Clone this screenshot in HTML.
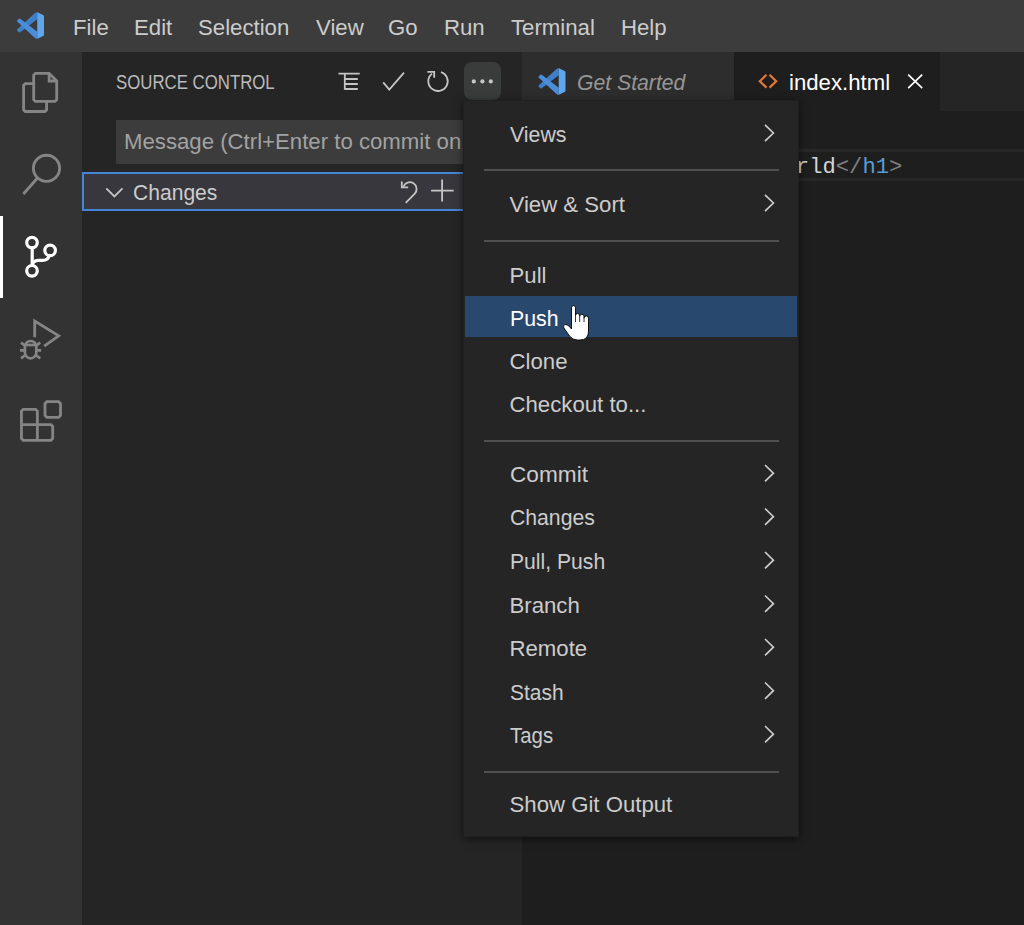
<!DOCTYPE html>
<html>
<head>
<meta charset="utf-8">
<style>
*{margin:0;padding:0;box-sizing:border-box}
html,body{width:1024px;height:925px;overflow:hidden;background:#1e1e1e;font-family:"Liberation Sans",sans-serif}
.a{position:absolute}
.t{position:absolute;white-space:nowrap;font-size:22.2px;line-height:22px}
svg{position:absolute;overflow:visible}
#title{left:0;top:0;width:1024px;height:52px;background:#3c3c3c}
#title .t{color:#cccccc;top:17px}
#act{left:0;top:52px;width:82px;height:873px;background:#333333}
#side{left:82px;top:52px;width:440px;height:873px;background:#252526}
#editor{left:522px;top:52px;width:502px;height:873px;background:#1e1e1e}
#tabs{left:522px;top:52px;width:502px;height:59px;background:#252526}
#menu{left:463px;top:100px;width:336px;height:737px;background:#252526;box-shadow:0 2px 8px rgba(0,0,0,0.55);border:1px solid #202020}
.mt{position:absolute;white-space:nowrap;font-size:22.2px;line-height:22px;color:#cccccc;left:509.5px;transform-origin:0 0}
.sep{position:absolute;left:484px;width:295px;height:2px;background:#5f5f5f;transform:scaleY(0.75)}
</style>
</head>
<body>
<!-- title bar -->
<div id="title" class="a">
  <svg style="left:17px;top:12px" width="27" height="27" viewBox="0 0 100 100">
    <path fill="#3f7fc8" d="M68.76 2.07 L75 0.5 V27.3 L12.15 75 a4.16 4.16 0 0 1 -5.32 -.24 l-5.5 -5 a4.17 4.17 0 0 1 0 -6.16 Z"/>
    <path fill="#4a8edb" d="M12.15 25 L75 72.7 V99.5 L68.76 97.93 L1.33 36.4 a4.17 4.17 0 0 1 0 -6.16 l5.5 -5 a4.16 4.16 0 0 1 5.32 -.24 Z"/>
    <path fill="#5fa6ec" d="M75 0.5 L75.86 .87 L96.46 10.8 A6.25 6.25 0 0 1 100 16.4 V83.6 a6.25 6.25 0 0 1 -3.54 5.63 L75.86 99.13 L75 99.5 Z"/>
  </svg>
  <div class="t" style="left:73px">File</div>
  <div class="t" style="left:134px">Edit</div>
  <div class="t" style="left:198px">Selection</div>
  <div class="t" style="left:316px">View</div>
  <div class="t" style="left:388px">Go</div>
  <div class="t" style="left:444px">Run</div>
  <div class="t" style="left:511px">Terminal</div>
  <div class="t" style="left:621px">Help</div>
</div>

<!-- activity bar -->
<div id="act" class="a">
  <div class="a" style="left:0;top:164px;width:3px;height:82px;background:#ffffff"></div>
</div>
<svg style="left:0;top:0" width="82" height="925" fill="none" stroke-linecap="round" stroke-linejoin="round">
  <!-- files -->
  <g stroke="#858585" stroke-width="2.8" stroke-linejoin="miter" stroke-linecap="butt">
    <path d="M33.7 83.7 H25.3 L23.6 85.4 V109.8 L25.3 111.5 H44.9 L46.6 109.8 V101.4"/>
    <path d="M35.4 73.3 H49.1 L56.7 80.9 V99.7 L55 101.4 H35.4 L33.7 99.7 V75 Z"/>
    <path d="M49.1 73.3 V81 H56.7"/>
  </g>
  <!-- search -->
  <g stroke="#858585" stroke-width="2.9" stroke-linecap="butt">
    <circle cx="46.5" cy="168.3" r="13.1"/>
    <path d="M37.5 178 L23.4 194"/>
  </g>
  <!-- git -->
  <g stroke="#ffffff" stroke-width="3.2">
    <circle cx="32" cy="242.6" r="5.3"/>
    <circle cx="50.1" cy="250.4" r="5.3"/>
    <circle cx="32" cy="270.8" r="5.3"/>
    <path d="M32.2 247.9 V265.5"/>
    <path d="M49.3 255.6 C48.3 259 46 260.4 42.5 260.4 H38.5 C35 260.4 32.6 262 32.3 265.5"/>
  </g>
  <!-- run & debug -->
  <g stroke="#858585" stroke-width="2.8" stroke-linecap="butt" stroke-linejoin="miter">
    <path d="M34.7 337.2 V321 L58.7 335.8 L44.2 346.2"/>
  </g>
  <g stroke="#858585" stroke-width="2.7" stroke-linecap="butt">
    <path d="M24.9 346.7 a5.7 5.7 0 0 1 11.4 0 V352.6 a5.7 5.7 0 0 1 -11.4 0 Z"/>
    <path d="M26 345 H35.2"/>
    <path d="M20 350.3 H24.8 M36.4 350.3 H41.2 M21 342.6 L25.4 346 M40.2 342.6 L35.8 346 M21 358.4 L25.4 355 M40.2 358.4 L35.8 355"/>
  </g>
  <!-- extensions -->
  <g stroke="#858585" stroke-width="2.8" stroke-linejoin="miter" stroke-linecap="butt">
    <path d="M23.25 409.3 H35.55 L37.35 411.1 V424.6 H50.9 L52.7 426.4 V438.5 L50.9 440.3 H23.25 L21.45 438.5 V411.1 Z"/>
    <path d="M21.45 424.6 H37.35 V440.3"/>
    <path d="M46.8 401.7 H58.7 L60.5 403.5 V415.5 L58.7 417.3 H46.8 L45 415.5 V403.5 Z"/>
  </g>
</svg>

<!-- sidebar -->
<div id="side" class="a"></div>
<div class="t" style="left:116px;top:71px;font-size:20px;color:#bbbbbb;transform:scaleX(0.84);transform-origin:0 0">SOURCE CONTROL</div>
<svg style="left:0;top:0" width="522" height="240" fill="none" stroke="#c5c5c5" stroke-linecap="butt" stroke-linejoin="miter">
  <g stroke-width="1.8">
    <path d="M338.5 73.6 H359.7 M344.8 73.6 V89.8 M344.8 79 H357.8 M344.8 84 H357.8 M344.8 89 H357.8"/>
    <path d="M383.2 82.3 L389.3 89.6 L404 72.6"/>
    <path d="M441 72.07 A9.7 9.7 0 1 1 432.03 73.66"/>
    <path d="M427.4 71.8 H434.2 V77.8"/>
  </g>
</svg>
<div class="a" style="left:464px;top:62px;width:37px;height:38px;border-radius:8px;background:#3a3b3b"></div>
<svg style="left:0;top:0" width="522" height="120">
  <circle cx="473.8" cy="81.4" r="2.1" fill="#c5c5c5"/>
  <circle cx="482.4" cy="81.4" r="2.1" fill="#c5c5c5"/>
  <circle cx="490.8" cy="81.4" r="2.1" fill="#c5c5c5"/>
</svg>
<!-- input -->
<div class="a" style="left:116px;top:120px;width:406px;height:44px;background:#3c3c3c"></div>
<div class="t" style="left:124px;top:131px;color:#a2a2a2">Message (Ctrl+Enter to commit on 'master')</div>
<!-- changes row -->
<div class="a" style="left:82px;top:172px;width:440px;height:39px;background:#37373d;border:2px solid #4584d6"></div>
<div class="t" style="left:133px;top:182px;color:#cccccc;transform:scaleX(0.95);transform-origin:0 0">Changes</div>
<svg style="left:0;top:0" width="522" height="240" fill="none" stroke="#c5c5c5" stroke-width="1.8">
  <path d="M106.3 188.3 L114.4 196.5 L122.5 188.3"/>
  <path d="M401.8 181.4 V187.4 H408.2"/>
  <path d="M403.4 186.7 A6.8 6.8 0 1 1 414.6 193.8 L405.7 202.8"/>
  <path d="M442.1 179.6 V201.6 M431.1 190.6 H453.7"/>
</svg>

<!-- editor -->
<div id="editor" class="a"></div>
<div id="tabs" class="a">
  <div class="a" style="left:0;top:0;width:212px;height:59px;background:#2d2d2d"></div>
  <div class="a" style="left:212px;top:0;width:206px;height:59px;background:#1e1e1e"></div>
</div>
<svg style="left:538px;top:68px" width="28" height="27" viewBox="0 0 100 100">
    <path fill="#3f7fc8" d="M68.76 2.07 L75 0.5 V27.3 L12.15 75 a4.16 4.16 0 0 1 -5.32 -.24 l-5.5 -5 a4.17 4.17 0 0 1 0 -6.16 Z"/>
    <path fill="#4a8edb" d="M12.15 25 L75 72.7 V99.5 L68.76 97.93 L1.33 36.4 a4.17 4.17 0 0 1 0 -6.16 l5.5 -5 a4.16 4.16 0 0 1 5.32 -.24 Z"/>
    <path fill="#5fa6ec" d="M75 0.5 L75.86 .87 L96.46 10.8 A6.25 6.25 0 0 1 100 16.4 V83.6 a6.25 6.25 0 0 1 -3.54 5.63 L75.86 99.13 L75 99.5 Z"/>
  </svg>
<div class="t" style="left:577px;top:72px;color:#969696;font-style:italic;transform:scaleX(0.955);transform-origin:0 0">Get Started</div>
<svg style="left:0;top:0" width="1024" height="112" fill="none" stroke-width="2.2">
  <path stroke="#e37933" d="M766.5 74.8 L759.8 81.2 L766.5 87.6 M769.5 74.8 L776.2 81.2 L769.5 87.6"/>
  <path stroke="#ffffff" stroke-width="1.7" d="M908.2 74.6 L922.2 88.2 M922.2 74.6 L908.2 88.2"/>
</svg>
<div class="t" style="left:789px;top:72px;color:#ffffff">index.html</div>
<!-- current line -->
<div class="a" style="left:522px;top:149px;width:502px;height:32px;border-top:3px solid #282828;border-bottom:3px solid #282828"></div>
<div class="t" style="left:636px;top:157px;font-family:'Liberation Mono',monospace;font-size:22.2px;color:#d4d4d4"><span style="color:#808080">&lt;</span><span style="color:#569cd6">h1</span><span style="color:#808080">&gt;</span>Hello World<span style="color:#808080">&lt;/</span><span style="color:#569cd6">h1</span><span style="color:#808080">&gt;</span></div>

<!-- menu -->
<div id="menu" class="a"></div>
<div class="a" style="left:465px;top:296px;width:332px;height:41px;background:#29486e"></div>
<div class="sep" style="top:169.4px"></div>
<div class="sep" style="top:239.5px"></div>
<div class="sep" style="top:439.8px"></div>
<div class="sep" style="top:770.5px"></div>
<div class="mt" style="top:124px;transform:scaleX(0.96)">Views</div>
<div class="mt" style="top:194px">View &amp; Sort</div>
<div class="mt" style="top:265px">Pull</div>
<div class="mt" style="top:308px;color:#ffffff;transform:scaleX(0.96)">Push</div>
<div class="mt" style="top:351px">Clone</div>
<div class="mt" style="top:394px">Checkout to...</div>
<div class="mt" style="top:464px;transform:scaleX(1.02)">Commit</div>
<div class="mt" style="top:507px;transform:scaleX(0.955)">Changes</div>
<div class="mt" style="top:551px;transform:scaleX(0.953)">Pull, Push</div>
<div class="mt" style="top:595px">Branch</div>
<div class="mt" style="top:638px">Remote</div>
<div class="mt" style="top:682px;transform:scaleX(0.944)">Stash</div>
<div class="mt" style="top:725px;transform:scaleX(0.92)">Tags</div>
<div class="mt" style="top:794px">Show Git Output</div>
<svg style="left:0;top:0" width="1024" height="925" fill="none" stroke="#cccccc" stroke-width="1.7">
  <path d="M765 124.8 L773.4 133 L765 141.2"/>
  <path d="M765 194.8 L773.4 203 L765 211.2"/>
  <path d="M765 465 L773.4 473.2 L765 481.4"/>
  <path d="M765 508.5 L773.4 516.7 L765 524.9"/>
  <path d="M765 552 L773.4 560.2 L765 568.4"/>
  <path d="M765 595.5 L773.4 603.7 L765 611.9"/>
  <path d="M765 639 L773.4 647.2 L765 655.4"/>
  <path d="M765 682.5 L773.4 690.7 L765 698.9"/>
  <path d="M765 726 L773.4 734.2 L765 742.4"/>
</svg>
<!-- cursor -->
<svg style="left:0;top:0" width="1024" height="925">
  <path fill="#ffffff" stroke="#000000" stroke-width="0.9" d="M571.5 307.6 a2 2 0 0 1 4 0 V315.6 a2.1 2.1 0 0 1 4.2 0 V316.4 a2.15 2.15 0 0 1 4.3 0 V318.2 a2.25 2.25 0 0 1 4.5 0 V331 Q588.5 340 580 340 H577.5 Q572.5 340 569.5 336 L563.8 327.8 Q562.6 325.3 565 324.6 Q567 324.2 569.2 326.3 L571.5 329 Z"/>
  <path stroke="#000000" stroke-width="0.8" fill="none" d="M575.5 315.6 V322 M579.7 316.4 V322 M584 318.2 V322"/>
</svg>
</body>
</html>
